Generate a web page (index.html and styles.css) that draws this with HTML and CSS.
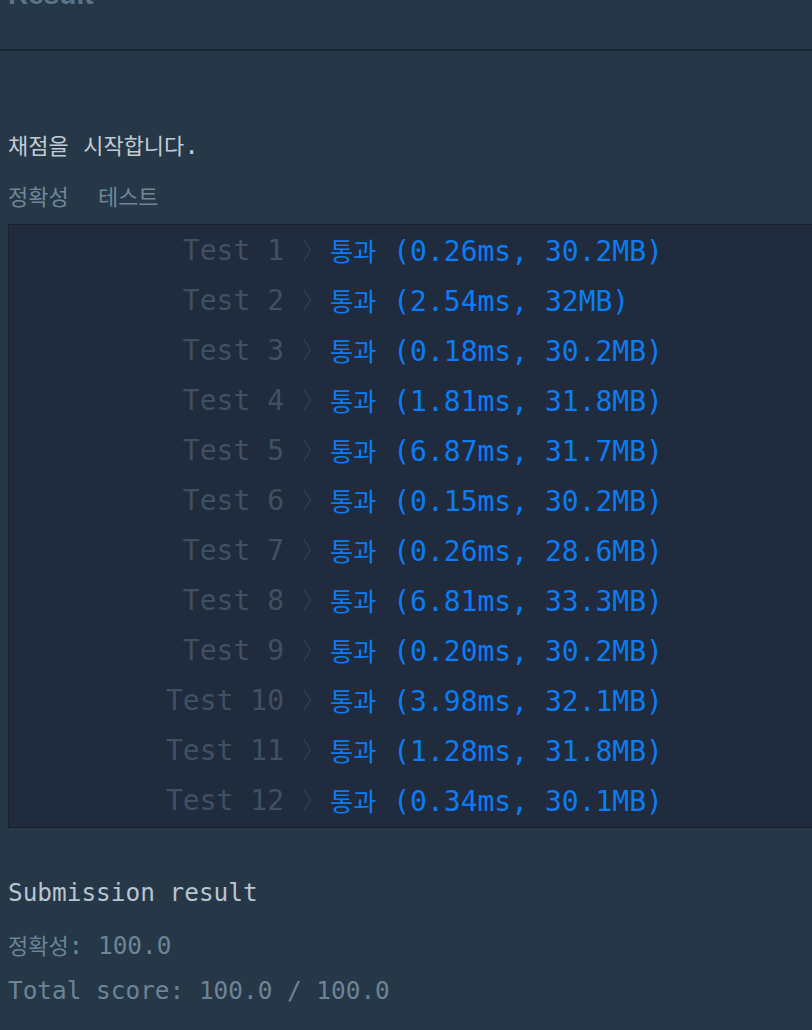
FILE: index.html
```html
<!DOCTYPE html>
<html lang="ko">
<head>
<meta charset="utf-8">
<title>Result</title>
<link rel="stylesheet" href="styles.css">
</head>
<body>
<header class="result-header">
  <h2 class="result-title">Result</h2>
</header>
<main class="console">
  <p class="console-line start"><span class="ko">채점을</span> <span class="ko">시작합니다</span>.</p>
  <p class="console-line tabs"><span class="ko">정확성</span>  <span class="ko">테스트</span></p>
  <div class="test-box">
    <div class="test-row"><span class="test-name">Test 1</span><svg class="chev" viewBox="0 0 10 24"><path d="M1.5 1 L8.5 12 L1.5 23"/></svg><span class="test-res"><span class="ko">통과</span> (0.26ms, 30.2MB)</span></div>
    <div class="test-row"><span class="test-name">Test 2</span><svg class="chev" viewBox="0 0 10 24"><path d="M1.5 1 L8.5 12 L1.5 23"/></svg><span class="test-res"><span class="ko">통과</span> (2.54ms, 32MB)</span></div>
    <div class="test-row"><span class="test-name">Test 3</span><svg class="chev" viewBox="0 0 10 24"><path d="M1.5 1 L8.5 12 L1.5 23"/></svg><span class="test-res"><span class="ko">통과</span> (0.18ms, 30.2MB)</span></div>
    <div class="test-row"><span class="test-name">Test 4</span><svg class="chev" viewBox="0 0 10 24"><path d="M1.5 1 L8.5 12 L1.5 23"/></svg><span class="test-res"><span class="ko">통과</span> (1.81ms, 31.8MB)</span></div>
    <div class="test-row"><span class="test-name">Test 5</span><svg class="chev" viewBox="0 0 10 24"><path d="M1.5 1 L8.5 12 L1.5 23"/></svg><span class="test-res"><span class="ko">통과</span> (6.87ms, 31.7MB)</span></div>
    <div class="test-row"><span class="test-name">Test 6</span><svg class="chev" viewBox="0 0 10 24"><path d="M1.5 1 L8.5 12 L1.5 23"/></svg><span class="test-res"><span class="ko">통과</span> (0.15ms, 30.2MB)</span></div>
    <div class="test-row"><span class="test-name">Test 7</span><svg class="chev" viewBox="0 0 10 24"><path d="M1.5 1 L8.5 12 L1.5 23"/></svg><span class="test-res"><span class="ko">통과</span> (0.26ms, 28.6MB)</span></div>
    <div class="test-row"><span class="test-name">Test 8</span><svg class="chev" viewBox="0 0 10 24"><path d="M1.5 1 L8.5 12 L1.5 23"/></svg><span class="test-res"><span class="ko">통과</span> (6.81ms, 33.3MB)</span></div>
    <div class="test-row"><span class="test-name">Test 9</span><svg class="chev" viewBox="0 0 10 24"><path d="M1.5 1 L8.5 12 L1.5 23"/></svg><span class="test-res"><span class="ko">통과</span> (0.20ms, 30.2MB)</span></div>
    <div class="test-row"><span class="test-name">Test 10</span><svg class="chev" viewBox="0 0 10 24"><path d="M1.5 1 L8.5 12 L1.5 23"/></svg><span class="test-res"><span class="ko">통과</span> (3.98ms, 32.1MB)</span></div>
    <div class="test-row"><span class="test-name">Test 11</span><svg class="chev" viewBox="0 0 10 24"><path d="M1.5 1 L8.5 12 L1.5 23"/></svg><span class="test-res"><span class="ko">통과</span> (1.28ms, 31.8MB)</span></div>
    <div class="test-row"><span class="test-name">Test 12</span><svg class="chev" viewBox="0 0 10 24"><path d="M1.5 1 L8.5 12 L1.5 23"/></svg><span class="test-res"><span class="ko">통과</span> (0.34ms, 30.1MB)</span></div>
  </div>
  <p class="console-line submission">Submission result</p>
  <p class="console-line score"><span class="ko">정확성</span>: 100.0</p>
  <p class="console-line score total">Total score: 100.0 / 100.0</p>
</main>
</body>
</html>
```

FILE: styles.css
```css
html, body {
  margin: 0;
  padding: 0;
  background: #263747;
  overflow: hidden;
}

body {
  font-family: "DejaVu Sans Mono", "Noto Sans CJK KR", monospace;
}

.result-header {
  height: 49px;
  border-bottom: 2px solid #1b2533;
  overflow: hidden;
}

.result-title {
  margin: -21px 0 0 8px;
  font-family: "Liberation Sans", Arial, sans-serif;
  font-weight: 700;
  font-size: 28px;
  line-height: 32px;
  color: #5b7487;
}

.console {
  padding: 79px 0 0 8px;
}

.console-line {
  margin: 0;
  font-size: 24.4px;
  line-height: 30px;
  white-space: pre;
}

.ko {
  font-family: "Noto Sans CJK KR", sans-serif;
  font-size: 0.9em;
}

.start {
  color: #c3ccd5;
}

.tabs {
  margin-top: 20px;
  color: #6f8898;
}

.test-box {
  margin-top: 12px;
  width: 900px;
  background: #202b3d;
  border: 1px solid #18212e;
  padding: 0 0 2px;
}

.test-row {
  display: flex;
  align-items: center;
  height: 50px;
  font-size: 28px;
  white-space: pre;
}

.test-name {
  width: 275px;
  text-align: right;
  color: #3f5064;
}

.chev {
  width: 10px;
  height: 24px;
  margin: 0 18px 0 18px;
  fill: none;
  stroke: #2f3c4e;
  stroke-width: 1.5;
}

.test-res {
  color: #0c7cf5;
}

.test-res .ko {
  font-size: 0.9em;
}

.submission {
  margin-top: 50px;
  color: #b8c4ce;
}

.score {
  margin-top: 22px;
  color: #6b8596;
}

.score.total {
  margin-top: 15px;
}
```
